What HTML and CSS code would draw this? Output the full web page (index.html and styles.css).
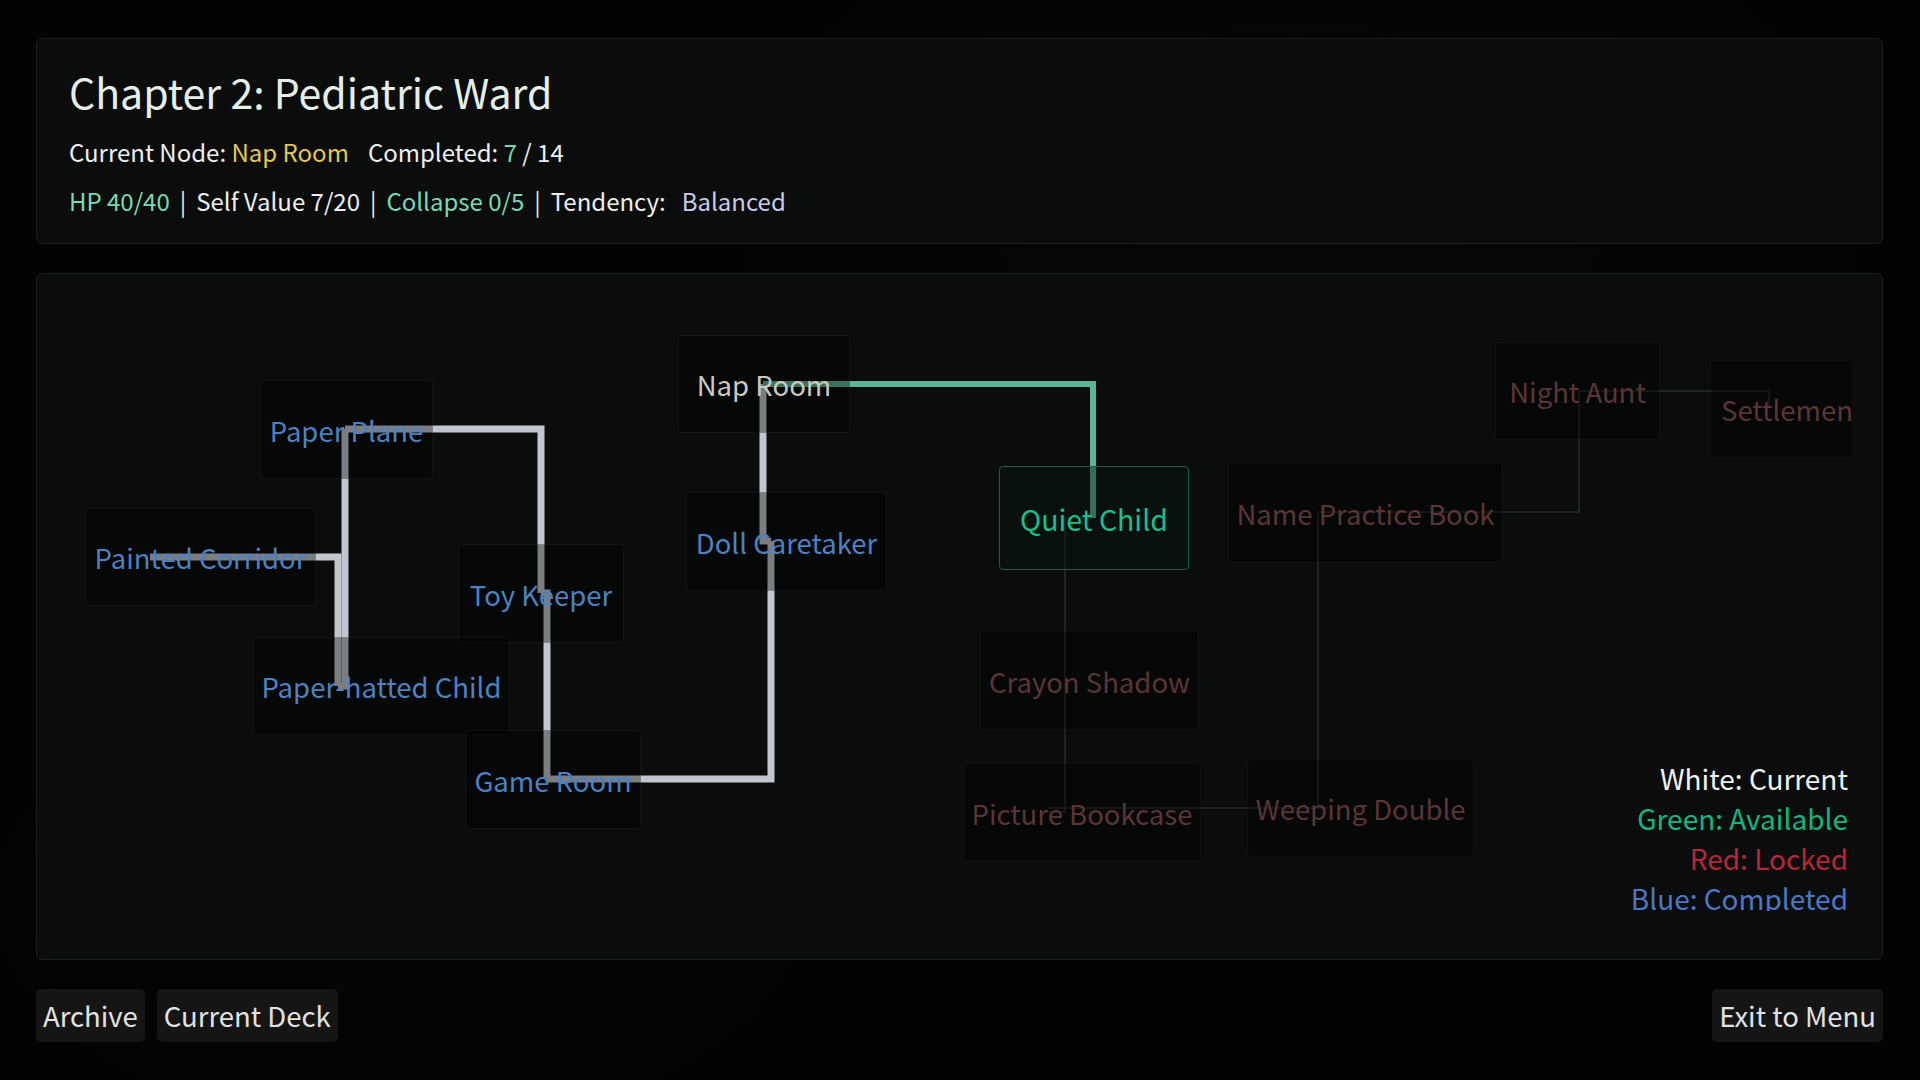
FILE: index.html
```html
<!DOCTYPE html>
<html lang="en">
<head>
<meta charset="utf-8">
<title>Chapter 2: Pediatric Ward</title>
<link rel="stylesheet" href="styles.css">
</head>
<body>
<div class="page">
  <header class="panel header">
    <h1 class="title">Chapter 2: Pediatric Ward</h1>
    <div class="info-line">
      <span>Current Node: <span class="yellow">Nap Room</span></span>
      <span class="completed">Completed: <span class="mint">7</span> / 14</span>
    </div>
    <div class="stat-line">
      <span class="mint">HP 40/40</span>
      <span class="sep">|</span>
      <span>Self Value 7/20</span>
      <span class="sep">|</span>
      <span class="mint">Collapse 0/5</span>
      <span class="sep">|</span>
      <span>Tendency:</span>
      <span class="lavender balanced">Balanced</span>
    </div>
  </header>

  <main class="panel map">
    <div class="canvas">
      <svg class="edges" width="1815" height="637" viewBox="0 0 1815 637">
        <g transform="translate(-37 -274)" fill="none" stroke-linejoin="miter">
          <g class="locked-edges" stroke="#1f2525" stroke-width="2">
            <path d="M1065 680 V518 H1093"/>
            <path d="M1065 680 V812 H1048"/>
            <path d="M1048 808 H1332"/>
            <path d="M1318 512 V808 H1332"/>
            <path d="M1318 512 H1579 V391"/>
            <path d="M1579 391 H1769 V409"/>
          </g>
          <g class="done-edges" stroke="#c2c6ce" stroke-width="7">
            <path d="M345 429 H541 V593"/>
            <path d="M338 686 V557 H150"/>
            <path d="M345 429 V686 H338"/>
            <path d="M547 779 V593 H541"/>
            <path d="M547 779 H771 V541"/>
            <path d="M763 384 V541 H771"/>
          </g>
          <path class="avail-edge" d="M763 384 H1093 V518" stroke="#5bb593" stroke-width="6"/>
        </g>
      </svg>

      <div class="node done" style="left:223px;top:106px;width:173px;height:99px">Paper Plane</div>
      <div class="node done" style="left:48px;top:234px;width:231px;height:98px">Painted Corridor</div>
      <div class="node done" style="left:421px;top:270px;width:166px;height:99px">Toy Keeper</div>
      <div class="node done" style="left:216px;top:363px;width:257px;height:98px">Paper-hatted Child</div>
      <div class="node done" style="left:428px;top:456px;width:176px;height:99px">Game Room</div>
      <div class="node current" style="left:641px;top:61px;width:172px;height:98px">Nap Room</div>
      <div class="node done" style="left:649px;top:218px;width:201px;height:99px">Doll Caretaker</div>
      <div class="node available" style="left:962px;top:192px;width:190px;height:104px">Quiet Child</div>
      <div class="node locked" style="left:943px;top:357px;width:219px;height:99px">Crayon Shadow</div>
      <div class="node locked" style="left:926px;top:489px;width:238px;height:99px">Picture Bookcase</div>
      <div class="node locked" style="left:1191px;top:189px;width:275px;height:100px">Name Practice Book</div>
      <div class="node locked" style="left:1458px;top:68px;width:165px;height:98px">Night Aunt</div>
      <div class="node locked left" style="left:1673px;top:86px;width:170px;height:98px">Settlement</div>
      <div class="node locked" style="left:1210px;top:485px;width:227px;height:98px">Weeping Double</div>

      <div class="legend">
        <div class="lg-white">White: Current</div>
        <div class="lg-green">Green: Available</div>
        <div class="lg-red">Red: Locked</div>
        <div class="lg-blue">Blue: Completed</div>
      </div>
    </div>
  </main>

  <footer class="actions">
    <div class="action-group">
      <button class="btn">Archive</button>
      <button class="btn">Current Deck</button>
    </div>
    <button class="btn">Exit to Menu</button>
  </footer>
</div>
</body>
</html>
```

FILE: styles.css
```css
* { box-sizing: border-box; }

html, body {
  margin: 0;
  padding: 0;
}

body {
  width: 1920px;
  height: 1080px;
  overflow: hidden;
  background:
    radial-gradient(ellipse 900px 500px at 1300px 200px, rgba(255,255,255,0.018), transparent 70%),
    radial-gradient(ellipse 700px 400px at 400px 900px, rgba(255,255,255,0.012), transparent 70%),
    #030303;
  font-family: "Noto Sans CJK SC", "Noto Sans", sans-serif;
  color: #efefef;
}

.page {
  height: 1080px;
  padding: 38px 37px 38px 36px;
  display: flex;
  flex-direction: column;
  gap: 29px;
}

.panel {
  background: #0b0c0c;
  border: 1px solid #162020;
  border-radius: 6px;
}

.header {
  padding: 25px 32px 24px;
  flex: none;
}

.title {
  margin: 0;
  font-size: 41px;
  font-weight: 400;
  line-height: 54px;
  color: #e6eee8;
}

.info-line {
  margin-top: 16px;
  font-size: 24px;
  line-height: 36px;
  display: flex;
  gap: 19px;
}

.stat-line {
  margin-top: 13px;
  font-size: 24px;
  line-height: 36px;
  display: flex;
  gap: 10px;
}

.stat-line .balanced { margin-left: 6px; }

.yellow { color: #e7c84c; }
.mint { color: #78dab2; }
.lavender { color: #c7cbe9; }
.sep { color: #e8e8e8; }

.map {
  flex: 1;
  padding: 0 30px 48px 0;
  display: flex;
}

.canvas {
  position: relative;
  flex: 1;
  overflow: hidden;
}

.edges {
  position: absolute;
  left: 0;
  top: 0;
}

.node {
  position: absolute;
  display: flex;
  align-items: center;
  justify-content: center;
  white-space: nowrap;
  font-size: 27.5px;
  background: rgba(0,0,0,0.37);
  border: 1px solid rgba(255,255,255,0.05);
  border-radius: 4px;
}

.node.left { justify-content: flex-start; padding-left: 10px; }

.node.done { color: #4b82c4; }
.node.current { color: #c9c9c1; }
.node.available {
  color: #18c08f;
  font-size: 28.5px;
  background: rgba(4,24,18,0.45);
  border: 1px solid #1b5f48;
}
.node.locked {
  color: #5b3535;
  border-color: rgba(255,255,255,0.04);
}

.legend {
  position: absolute;
  right: 4px;
  top: 484px;
  text-align: right;
  font-size: 28px;
  line-height: 40px;
}

.lg-white { color: #f2f2f2; }
.lg-green { color: #12b681; }
.lg-red { color: #b9263a; }
.lg-blue { color: #4a78c6; }

.actions {
  flex: none;
  height: 53px;
  display: flex;
  justify-content: space-between;
}

.action-group {
  display: flex;
  gap: 12px;
}

.btn {
  height: 53px;
  padding: 0 7px;
  border: none;
  border-radius: 5px;
  background: #151515;
  color: #e2e2e2;
  font-family: "Noto Sans CJK SC", "Noto Sans", sans-serif;
  font-size: 27.5px;
  line-height: 53px;
}
```
